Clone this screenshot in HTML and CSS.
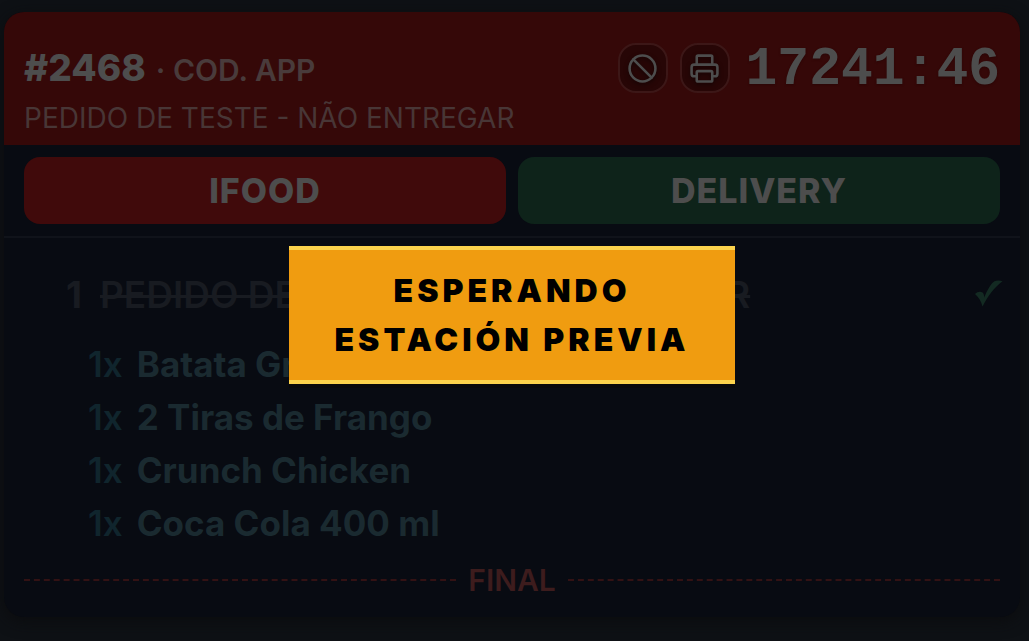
FILE: index.html
```html
<!DOCTYPE html>
<html lang="es">
<head>
<meta charset="utf-8">
<meta name="viewport" content="width=device-width, initial-scale=1">
<title>Pedido #2468</title>
<link rel="stylesheet" href="styles.css">
</head>
<body>
<main class="board">
  <article class="ticket">
    <header class="ticket-head">
      <div class="head-row">
        <h1 class="order"><span class="order-number">#2468</span> <span class="order-code">· COD. APP</span></h1>
        <div class="actions">
          <button class="icon-button" type="button" aria-label="Anular">
            <svg class="icon" viewBox="0 0 24 24"><circle cx="12" cy="12" r="10"/><path d="m4.9 4.9 14.2 14.2"/></svg>
          </button>
          <button class="icon-button" type="button" aria-label="Imprimir">
            <svg class="icon" viewBox="0 0 24 24"><path d="M6 18H4a2 2 0 0 1-2-2v-5a2 2 0 0 1 2-2h16a2 2 0 0 1 2 2v5a2 2 0 0 1-2 2h-2"/><path d="M6 9V3a1 1 0 0 1 1-1h10a1 1 0 0 1 1 1v6"/><rect x="6" y="14" width="12" height="8" rx="1"/></svg>
          </button>
          <time class="timer">17241:46</time>
        </div>
      </div>
      <p class="customer">PEDIDO DE TESTE - NÃO ENTREGAR</p>
    </header>
    <div class="tags">
      <span class="tag tag-source">IFOOD</span>
      <span class="tag tag-mode">DELIVERY</span>
    </div>
    <div class="items">
      <div class="item">
        <span class="item-qty">1</span>
        <s class="item-name">PEDIDO DE TESTE - NÃO ENTREGAR</s>
        <svg class="check" viewBox="0 0 28 28" role="img" aria-label="Listo"><path d="M0 14C2.500 11.500 5.500 11 7.500 12.500C8.700 13.500 9 15 9.300 17.500C12.500 9.500 16 3.500 19.500 1.300C21.500 0.200 25 0.300 27.500 1.200C19 7.500 13 16 7.500 26.500C6 20.500 3.500 17 0 14Z"/></svg>
      </div>
      <ul class="modifiers">
        <li class="modifier"><span class="modifier-qty">1x</span><span>Batata Grande</span></li>
        <li class="modifier"><span class="modifier-qty">1x</span><span>2 Tiras de Frango</span></li>
        <li class="modifier"><span class="modifier-qty">1x</span><span>Crunch Chicken</span></li>
        <li class="modifier"><span class="modifier-qty">1x</span><span>Coca Cola 400 ml</span></li>
      </ul>
    </div>
    <footer class="ending">FINAL</footer>
    <div class="overlay">
      <p class="notice" role="status">ESPERANDO<br>ESTACIÓN PREVIA</p>
    </div>
  </article>
</main>
</body>
</html>
```
FILE: styles.css
```css
* {
  box-sizing: border-box;
}

body {
  margin: 0;
  min-height: 100vh;
  background: #0e1115;
  font-family: Inter, "Liberation Sans", sans-serif;
}

h1,
p,
ul {
  margin: 0;
  padding: 0;
}

.board {
  padding: 12px 9px 24px 4px;
}

.ticket {
  position: relative;
  overflow: hidden;
  border-radius: 20px;
  background: #080b12;
  box-shadow: 0 4px 16px #0b0c0e;
}

.ticket-head {
  padding: 24px 20px 8px;
  background: #350808;
}

.head-row {
  display: flex;
  align-items: center;
  justify-content: space-between;
  height: 64px;
}

.order {
  display: flex;
  align-items: baseline;
  gap: 10px;
  padding-bottom: 2px;
}

.order-number {
  color: #4d4d4d;
  font-size: 37px;
  font-weight: 800;
}

.order-code {
  color: #493b3b;
  font-size: 30px;
  font-weight: 600;
}

.actions {
  display: flex;
  align-items: center;
  gap: 12px;
}

.icon-button {
  display: grid;
  place-items: center;
  width: 50px;
  height: 50px;
  padding: 0;
  border: 2px solid #3c1717;
  border-radius: 18px;
  background: #270606;
}

.icon {
  width: 31px;
  height: 31px;
  fill: none;
  stroke: #4d4d4d;
  stroke-width: 2;
  stroke-linecap: round;
  stroke-linejoin: round;
  filter: drop-shadow(0 2px 2px #140303);
}

.timer {
  padding: 4px 0 0 4px;
  color: #4d4d4d;
  font-family: "Liberation Mono", monospace;
  font-size: 53px;
  font-weight: 700;
  text-shadow: 0 1px 2px #2a0606;
}

.customer {
  color: #483636;
  font-size: 28px;
  line-height: 37px;
}

.tags {
  display: grid;
  grid-template-columns: 1fr 1fr;
  gap: 12px;
  padding: 12px 20px;
  border-bottom: 2px solid #10131a;
}

.tag {
  border-radius: 16px;
  color: #4d4d4d;
  font-size: 34px;
  font-weight: 800;
  letter-spacing: 1px;
  line-height: 67px;
  text-align: center;
}

.tag-source {
  background: #400a0b;
}

.tag-mode {
  background: #0e231a;
}

.items {
  padding: 28px 17px 0 62px;
}

.item {
  display: flex;
  align-items: center;
  gap: 18px;
  height: 56px;
  color: #181b21;
  font-size: 37px;
  font-weight: 600;
}

.item-qty {
  font-weight: 700;
}

.item-name {
  flex: 1;
  text-decoration-thickness: 3px;
}

.check {
  width: 28px;
  height: 28px;
  fill: #132a22;
}

.modifiers {
  padding: 16px 0 0 22px;
  list-style: none;
}

.modifier {
  display: flex;
  gap: 14px;
  color: #1a2a30;
  font-size: 35px;
  font-weight: 700;
  line-height: 53px;
}

.modifier-qty {
  color: #10252d;
  font-weight: 600;
}

.ending {
  display: flex;
  align-items: center;
  gap: 12px;
  padding: 11px 20px 18px;
  color: #3d1c1d;
  font-size: 30px;
  font-weight: 600;
  line-height: 38px;
}

.ending::before,
.ending::after {
  content: "";
  flex: 1;
  border-top: 2px dashed #331214;
}

.overlay {
  position: absolute;
  inset: 0;
  display: grid;
  place-items: center;
}

.notice {
  padding: 16px 45px;
  border: solid #fcd34d;
  border-width: 4px 0;
  background: #f09c10;
  box-shadow: 0 4px 0 #08090b;
  color: #000;
  font-size: 32px;
  font-weight: 900;
  letter-spacing: 4px;
  line-height: 49px;
  text-align: center;
}
```
